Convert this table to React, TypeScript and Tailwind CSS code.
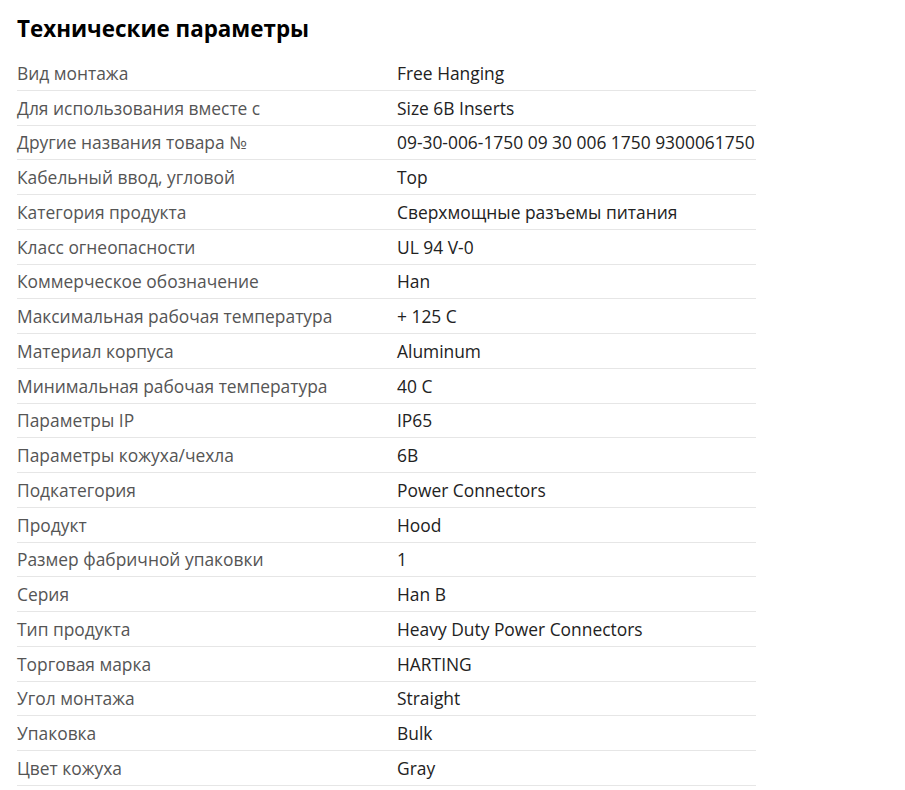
const specs: [string, string][] = [
  ["Вид монтажа", "Free Hanging"],
  ["Для использования вместе с", "Size 6B Inserts"],
  ["Другие названия товара №", "09-30-006-1750 09 30 006 1750 9300061750"],
  ["Кабельный ввод, угловой", "Top"],
  ["Категория продукта", "Сверхмощные разъемы питания"],
  ["Класс огнеопасности", "UL 94 V-0"],
  ["Коммерческое обозначение", "Han"],
  ["Максимальная рабочая температура", "+ 125 C"],
  ["Материал корпуса", "Aluminum"],
  ["Минимальная рабочая температура", "40 C"],
  ["Параметры IP", "IP65"],
  ["Параметры кожуха/чехла", "6B"],
  ["Подкатегория", "Power Connectors"],
  ["Продукт", "Hood"],
  ["Размер фабричной упаковки", "1"],
  ["Серия", "Han B"],
  ["Тип продукта", "Heavy Duty Power Connectors"],
  ["Торговая марка", "HARTING"],
  ["Угол монтажа", "Straight"],
  ["Упаковка", "Bulk"],
  ["Цвет кожуха", "Gray"],
];

export default function App() {
  return (
    <div className="min-h-screen bg-white px-[17px] pt-[14px] font-['Open_Sans',sans-serif]">
      <h2 className="text-[22.4px] font-bold leading-[30px] text-black">Технические параметры</h2>
      <div className="mt-[12px] w-[739px]">
        {specs.map(([label, value]) => (
          <div key={label} className="flex h-[34.75px] items-center border-b border-[#e6e6e6]">
            <div className="w-[380px] text-[17.4px] text-[#555]">{label}</div>
            <div className="text-[17.4px] text-[#222]">{value}</div>
          </div>
        ))}
      </div>
    </div>
  );
}
